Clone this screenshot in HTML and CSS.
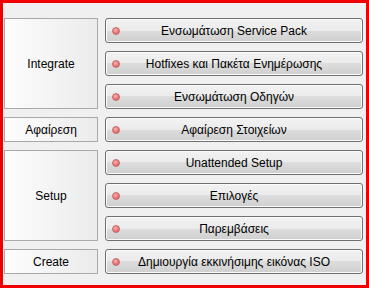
FILE: index.html
```html
<!DOCTYPE html>
<html>
	<head>
		<meta charset="UTF-8">
		<title></title>
		<link rel="stylesheet" href="styles.css">
	</head>
	<body>
		<div class="panel">
			<div class="group g-integrate">Integrate</div>
			<div class="group g-remove">Αφαίρεση</div>
			<div class="group g-setup">Setup</div>
			<div class="group g-create">Create</div>

			<div class="btn b1"><span class="dot"></span>Ενσωμάτωση Service Pack</div>
			<div class="btn b2"><span class="dot"></span>Hotfixes και Πακέτα Ενημέρωσης</div>
			<div class="btn b3"><span class="dot"></span>Ενσωμάτωση Οδηγών</div>
			<div class="btn b4"><span class="dot"></span>Αφαίρεση Στοιχείων</div>
			<div class="btn b5"><span class="dot"></span>Unattended Setup</div>
			<div class="btn b6"><span class="dot"></span>Επιλογές</div>
			<div class="btn b7"><span class="dot"></span>Παρεμβάσεις</div>
			<div class="btn b8"><span class="dot"></span>Δημιουργία εκκινήσιμης εικόνας ISO</div>
		</div>
	</body>
</html>
```

FILE: styles.css
```css
*{
	margin:0;padding:0;
	box-sizing:border-box;
}
html,body{
	width:369px;
	height:288px;
	overflow:hidden;
}
body{
	background:#f0f0f0;
	border:3px solid #f00000;
	font-family:"Liberation Sans",Arial,sans-serif;
	font-size:12px;
	color:#000;
}
.panel{
	display:grid;
	grid-template-columns:94px 258px;
	grid-template-rows:repeat(8,25px);
	column-gap:7px;
	row-gap:8px;
	padding:15px 3px 0 1px;
}
.group{
	grid-column:1;
	display:flex;
	align-items:center;
	justify-content:center;
	border:1px solid #a9a9a9;
	background:linear-gradient(to right,#fdfdfd,#ebebeb);
}
.g-integrate{grid-row:1 / 4;}
.g-remove{grid-row:4;}
.g-setup{grid-row:5 / 8;}
.g-create{grid-row:8;}

.btn{
	grid-column:2;
	position:relative;
	display:flex;
	align-items:center;
	justify-content:center;
	border:1px solid #707070;
	border-radius:3px;
	background:linear-gradient(#f2f2f2 0%,#ebebeb 50%,#dddddd 50%,#cfcfcf 100%);
	box-shadow:inset 0 0 0 1px #fbfbfb;
	padding-top:1px;
}
.b1{grid-row:1;}
.b2{grid-row:2;}
.b3{grid-row:3;}
.b4{grid-row:4;}
.b5{grid-row:5;}
.b6{grid-row:6;}
.b7{grid-row:7;}
.b8{grid-row:8;}

/* κόκκινη τελεία */
.dot{
	position:absolute;
	left:6px;
	top:8px;
	width:8px;
	height:8px;
	border-radius:50%;
	border:1px solid #c46a6a;
	background:radial-gradient(circle at 40% 35%,#fbb6b6,#e86e6e 60%,#d45656);
}
```
